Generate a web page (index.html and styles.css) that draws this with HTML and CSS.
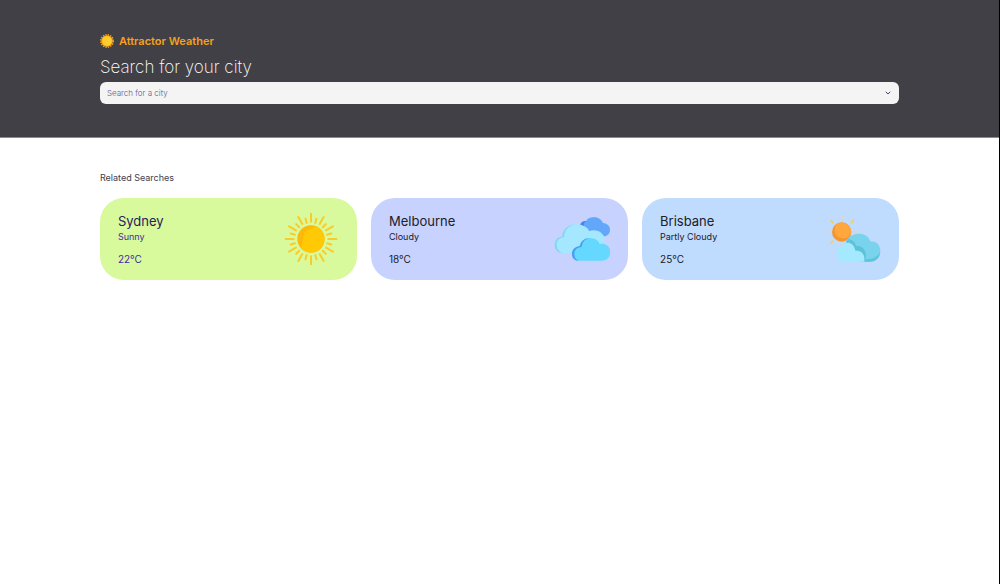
FILE: index.html
```html
<!DOCTYPE html>
<html lang="en">
<head>
<meta charset="utf-8">
<meta name="viewport" content="width=device-width, initial-scale=1">
<title>Attractor Weather</title>
<link rel="stylesheet" href="styles.css">
</head>
<body>
<header class="hero">
  <div class="container">
    <a class="brand" href="#">
      <svg class="brand-icon" viewBox="0 0 28 28" aria-hidden="true">
        <circle cx="14" cy="14" r="12.500" fill="none" stroke="#f9a51a" stroke-width="3" stroke-dasharray="2.600 2.310"/>
        <circle cx="14" cy="14" r="11.500" fill="#fbb01e"/>
        <circle cx="14" cy="14" r="9" fill="#ffd02b"/>
      </svg>
      <span>Attractor Weather</span>
    </a>
    <h1 class="title"><label for="city">Search for your city</label></h1>
    <div class="search">
      <input class="search-input" id="city" type="text" placeholder="Search for a city">
      <button class="search-toggle" type="button" aria-label="Show cities">
        <svg viewBox="0 0 8 8" aria-hidden="true"><path d="M2 3l2 2 2-2" fill="none" stroke="currentColor" stroke-width="1" stroke-linecap="round" stroke-linejoin="round"/></svg>
      </button>
    </div>
  </div>
</header>
<main class="container related">
  <h2 class="subtitle">Related Searches</h2>
  <div class="cards">
    <a class="card card-sunny" href="#sydney">
      <div>
        <h3 class="city">Sydney</h3>
        <p class="condition">Sunny</p>
        <p class="temp">22°C</p>
      </div>
      <svg class="weather" viewBox="9 18 168 168" aria-hidden="true">
        <defs>
          <g id="rays">
            <path d="M93 26v24M93 154v24" stroke="#f9cc28" stroke-width="6"/>
            <path d="M93 39v13M93 152v13" stroke="#f9cc28" stroke-width="6" transform="rotate(15 93 102)"/>
          </g>
        </defs>
        <g stroke-linecap="round">
          <use href="#rays"/>
          <use href="#rays" transform="rotate(30 93 102)"/>
          <use href="#rays" transform="rotate(60 93 102)"/>
          <use href="#rays" transform="rotate(90 93 102)"/>
          <use href="#rays" transform="rotate(120 93 102)"/>
          <use href="#rays" transform="rotate(150 93 102)"/>
        </g>
        <circle cx="93" cy="102" r="41" fill="#fdb90a"/>
        <path d="M109 64a41 41 0 1 1-43 69c-5-13 4-20 4-33 0-14 5-21 14-25 11-2 16-8 25-11z" fill="#ffca05"/>
      </svg>
    </a>
    <a class="card card-cloudy" href="#melbourne">
      <div>
        <h3 class="city">Melbourne</h3>
        <p class="condition">Cloudy</p>
        <p class="temp">18°C</p>
      </div>
      <svg class="weather" viewBox="27 18 168 168" aria-hidden="true">
        <path d="M106 63c0-10 7-15 17-14 3-8 12-12 21-12 15-2 25 6 30 17 14 1 21 10 21 20 0 12-8 20-20 20-21 0-69-7-69-31z" fill="#62a7fa"/>
        <path d="M113 50c3-2 7-2 11-1-7 3-9 8-6 15l-9 2c-5-7-3-13 4-16z" fill="#4389ed"/>
        <path d="M54 144c-15 0-25-10-25-24s8-24 22-25c3-23 19-37 42-37 20 0 35 9 39 20 24-8 45 4 49 28l-30 38z" fill="#a5e7ff"/>
        <path d="M54 144c-15 0-25-10-25-24s8-24 22-25c3-23 19-37 42-37-22 2-34 16-36 39-17 2-23 12-22 24 1 13 8 20 19 23z" fill="#7fd6f6"/>
        <path d="M102 167c-14 0-21-9-21-20 0-13 9-22 23-23 4-15 13-24 29-25 18 0 29 9 31 18 20-3 32 9 32 25 0 15-11 25-25 25z" fill="#65d8ff"/>
        <path d="M102 167c-14 0-21-9-21-20 0-13 9-22 23-23 4-15 13-24 29-25-14 3-21 13-23 27-14 1-22 9-22 21 0 11 6 18 14 20z" fill="#4b9cf1"/>
      </svg>
    </a>
    <a class="card card-partly" href="#brisbane">
      <div>
        <h3 class="city">Brisbane</h3>
        <p class="condition">Partly Cloudy</p>
        <p class="temp">25°C</p>
      </div>
      <svg class="weather" viewBox="30 18 168 168" aria-hidden="true">
        <g stroke-width="5" stroke-linecap="round">
          <path d="M81 35v9M81 117v1M34 81h9M119 81h9" stroke="#e5d4be"/>
          <path d="M48 47l6 6M115 47l-6 6M48 114l6-6" stroke="#f6cf58"/>
        </g>
        <circle cx="80" cy="81" r="29" fill="#f6952b"/>
        <path d="M75 53a28 28 0 0 1 33 31c-4 10-11 16-22 16-17 0-27-10-27-25 0-12 7-19 16-22z" fill="#ffa63c"/>
        <path d="M93 110c9-17 22-24 39-24 16 0 29 8 34 23 18-1 30 12 30 29 0 19-12 32-31 32h-30z" fill="#79d3ed"/>
        <path d="M93 110l6-8c12 1 21 9 24 20 17 0 27 9 30 25 0 9-1 13-3 16 21 1 37-6 45-21-2 17-13 28-30 28h-30z" fill="#5cc3d9"/>
        <path d="M91 170c-17 0-26-11-26-25 0-13 8-23 22-25 3-11 29-12 34 17 18-1 27 10 27 24v9z" fill="#a5e9ff"/>
      </svg>
    </a>
  </div>
</main>
</body>
</html>
```
FILE: styles.css
```css
* {
  box-sizing: border-box;
}

html {
  background: #fff;
}

body {
  margin: 0;
  min-height: 100vh;
  border-right: 1px solid #000;
  font-family: Inter, "Liberation Sans", sans-serif;
  color: #202027;
}

h1, h2, h3, p {
  margin: 0;
  font-weight: 400;
}

.container {
  width: 80%;
  margin: 0 auto;
}

.hero {
  padding: 33px 0;
  background: #414046;
  border-bottom: 1px solid #8c8b90;
}

.brand {
  display: flex;
  align-items: center;
  gap: 5px;
  color: #f6a11c;
  font-size: 11px;
  font-weight: 600;
  line-height: 16px;
  text-decoration: none;
}

.brand-icon {
  width: 14px;
  height: 14px;
}

.title {
  padding: 6px 0 3px;
  color: #fff;
  font-size: 17px;
  font-weight: 200;
  line-height: 24px;
}

.search {
  display: flex;
  align-items: center;
  height: 22px;
  padding: 0 7px;
  background: #f4f4f5;
  border-radius: 6px;
}

.search-input {
  flex: 1;
  min-width: 0;
  padding: 0;
  border: 0;
  outline: 0;
  background: transparent;
  color: #3f3f46;
  font: 300 8px/16px Inter, "Liberation Sans", sans-serif;
}

.search-input::placeholder {
  color: #5b578a;
  opacity: 1;
}

.search-toggle {
  display: flex;
  padding: 0;
  border: 0;
  background: transparent;
  color: #45416a;
}

.search-toggle svg {
  width: 8px;
  height: 8px;
}

.related {
  padding: 34px 0;
}

.subtitle {
  margin-bottom: 14px;
  color: #41404e;
  font-size: 9px;
  line-height: 12px;
}

.cards {
  display: grid;
  grid-template-columns: repeat(3, 1fr);
  gap: 14px;
}

.card {
  display: flex;
  align-items: center;
  justify-content: space-between;
  padding: 13px 18px;
  border-radius: 24px;
  color: #202027;
  text-decoration: none;
}

.card-sunny {
  background: #d9f99d;
  color: #3730a3;
}

.card-sunny .city {
  color: #26215c;
}

.card-cloudy {
  background: #c7d2fe;
}

.card-partly {
  background: #bfdbfe;
}

.city {
  font-size: 13px;
  line-height: 19px;
}

.condition {
  margin-bottom: 9px;
  font-size: 9px;
  line-height: 12px;
}

.temp {
  font-size: 10px;
  line-height: 15px;
}

.weather {
  width: 56px;
  height: 56px;
}
```
